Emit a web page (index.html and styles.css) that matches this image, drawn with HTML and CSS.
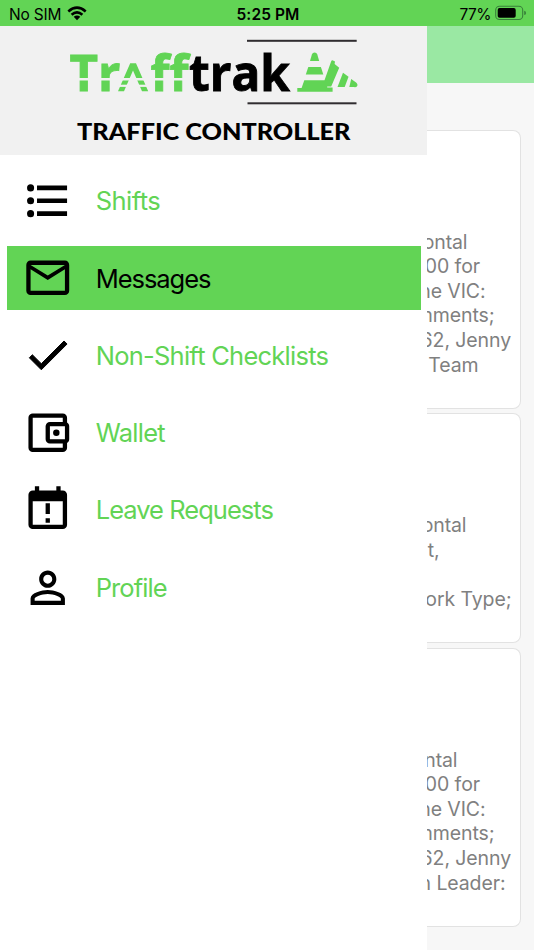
FILE: index.html
```html
<!DOCTYPE html>
<html lang="en">
<head>
<meta charset="utf-8">
<title>Trafftrak</title>
<link rel="stylesheet" href="styles.css">
</head>
<body>
<header class="status">
  <div class="carrier"><span>No SIM</span>
    <svg class="wifi" width="20" height="15" viewBox="0 0 20 15"><g fill="none" stroke="#000" stroke-width="2.6"><path d="M1.3 5.4Q10-2.2 18.7 5.4"/><path d="M4.6 8.8Q10 4 15.4 8.8"/></g><path d="M6.7 10.8Q10 8.1 13.3 10.8L10 14.3Z"/></svg>
  </div>
  <div class="clock">5:25 PM</div>
  <div class="power"><span>77%</span>
    <svg width="32" height="16" viewBox="0 0 32 16"><rect x=".7" y="1.2" width="27" height="13.3" rx="3.8" fill="none" stroke="#38803a" stroke-width="1.1"/><rect x="2.7" y="3.1" width="18" height="9.6" rx="1.8"/><path d="M29.2 5.7Q31.1 6.2 31.1 7.9T29.2 10.1Z" fill="#38803a"/></svg>
  </div>
</header>
<div class="app">
  <aside class="drawer">
    <div class="brand">
      <svg width="427" height="129" viewBox="0 26 427 129">
        <g class="logo">
          <g class="green">
            <text x="69.5" y="91" textLength="51" lengthAdjust="spacingAndGlyphs">Tr</text>
            <path class="peak" d="M118 91.2L130.2 63.3H136L148.2 91.2H142L133 70.5L124 91.2Z"/>
            <text x="150.5" y="91" textLength="38" lengthAdjust="spacingAndGlyphs">ff</text>
          </g>
          <text class="dark" x="189" y="91" textLength="101" lengthAdjust="spacingAndGlyphs">trak</text>
        </g>
        <g fill="#f1f1f1"><rect x="68" y="78" width="120.5" height="2.5"/><rect x="117" y="84.7" width="32" height="2.2"/></g>
        <g fill="#302d30"><rect x="247" y="39.8" width="109.7" height="2"/><rect x="247.5" y="102.3" width="109" height="2"/></g>
        <g fill="#61d455">
          <path d="M310 61L311.9 54.5Q312.5 52.6 314.6 52.6T317.3 54.5L319.2 61Z"/>
          <path d="M308.3 67H320.9L323.3 74.6H305.8Z"/>
          <path d="M304.3 80.2H324.5L331.2 61.2Q331.7 60 333 60.5L335 61.4L334.6 64L339.2 67.8L331.2 86.4H327.2V87.4H332.6V91.8H297.3V88H301.6Z"/>
          <path d="M343 72.7L348.5 76.8L344.7 86.9H337.5Z"/>
          <path d="M351.2 79L356.1 82.5Q358.3 84.7 357 86.2Q356.4 87.4 354 87.1H349.3Z"/>
        </g>
        <text class="role" x="77" y="139.6" textLength="273.5" lengthAdjust="spacingAndGlyphs">TRAFFIC CONTROLLER</text>
      </svg>
    </div>
    <nav class="menu">
      <a class="item"><svg viewBox="0 0 24 24"><circle cx="4" cy="6" r="1.65"/><circle cx="4" cy="12" r="1.65"/><circle cx="4" cy="18" r="1.65"/><path d="M7 4.9h14v2.2H7zM7 10.9h14v2.2H7zM7 16.9h14v2.2H7z"/></svg><span class="l-shifts">Shifts</span></a>
      <a class="item active"><svg viewBox="0 0 24 24"><path d="M22 6c0-1.1-.9-2-2-2H4c-1.1 0-2 .9-2 2v12c0 1.1.9 2 2 2h16c1.1 0 2-.9 2-2V6zm-2 0l-8 5-8-5h16zm0 12H4V8l8 5 8-5v10z"/></svg><span class="l-messages">Messages</span></a>
      <a class="item"><svg class="tick" viewBox="0 0 24 24"><path d="M9 16.17L4.83 12l-1.42 1.41L9 19 21 7l-1.41-1.41z"/></svg><span class="l-checklists">Non-Shift Checklists</span></a>
      <a class="item"><svg viewBox="0 0 24 24"><path d="M21 7.28V5c0-1.1-.9-2-2-2H5c-1.11 0-2 .9-2 2v14c0 1.1.89 2 2 2h14c1.1 0 2-.9 2-2v-2.28c.59-.35 1-.98 1-1.72V9c0-.74-.41-1.37-1-1.72zM20 9v6h-7V9h7zM5 19V5h14v2h-6c-1.1 0-2 .9-2 2v6c0 1.1.9 2 2 2h6v2H5z"/><circle cx="16" cy="12" r="1.5"/></svg><span class="l-wallet">Wallet</span></a>
      <a class="item"><svg viewBox="0 0 24 24"><path fill-rule="evenodd" d="M6 1h2v2h8V1h2v2h1a2 2 0 0 1 2 2v14a2 2 0 0 1-2 2H5a2 2 0 0 1-2-2V5a2 2 0 0 1 2-2h1zM5 8v11h14V8zM11 9h2v5h-2zM11 16h2v2h-2z"/></svg><span class="l-leave">Leave Requests</span></a>
      <a class="item"><svg viewBox="0 0 24 24"><path d="M12 5.9a2.1 2.1 0 1 1 0 4.2 2.1 2.1 0 0 1 0-4.2m0 9c2.97 0 6.1 1.46 6.1 2.1v1.1H5.9V17c0-.64 3.13-2.1 6.1-2.1M12 4C9.79 4 8 5.79 8 8s1.79 4 4 4 4-1.79 4-4-1.79-4-4-4zm0 9c-2.67 0-8 1.34-8 4v3h16v-3c0-2.66-5.33-4-8-4z"/></svg><span class="l-profile">Profile</span></a>
    </nav>
  </aside>
  <main class="page">
    <div class="toolbar"></div>
    <section class="feed">
      <article class="card tall">
        <p class="r-a">ontal</p><p class="r-for">00 for</p><p class="r-vic">he VIC:</p><p class="r-ments">mments;</p><p class="r-jenny">62, Jenny</p><p class="r-team">Team</p>
      </article>
      <article class="card short">
        <p class="r-b">ontal</p><p class="r-t">t,</p><p class="r-t">&nbsp;</p><p class="r-type">ork Type;</p>
      </article>
      <article class="card tall">
        <p class="r-c">ntal</p><p class="r-for">00 for</p><p class="r-vic">he VIC:</p><p class="r-ments">mments;</p><p class="r-jenny">62, Jenny</p><p class="r-leader">n Leader:</p>
      </article>
    </section>
  </main>
</div>
</body>
</html>
```
FILE: styles.css
```css
* { box-sizing: border-box; }
body {
  margin: 0;
  width: 534px;
  height: 950px;
  overflow: hidden;
  background: #fff;
  font-family: Inter, "Liberation Sans", sans-serif;
  color: #000;
}
.status {
  height: 26px;
  background: #62d455;
  display: grid;
  grid-template-columns: 1fr auto 1fr;
  align-items: center;
  padding: 3px 7px 0 9px;
  font-size: 15.5px;
  line-height: 23px;
}
.carrier, .power { display: flex; align-items: center; }
.carrier { gap: 6px; letter-spacing: -.2px; }
.wifi { margin-top: -3px; }
.power { justify-content: flex-end; gap: 4px; letter-spacing: -.5px; }
.power svg { margin-top: -3px; }
.clock { font-weight: 600; font-size: 15.5px; letter-spacing: .1px; }
.app { display: grid; grid-template-columns: 427px 107px; height: 924px; }
.drawer { background: #fff; }
.brand { height: 129px; background: #f1f1f1; }
.brand svg { display: block; }
.logo { font: 700 51px "Open Sans", sans-serif; }
.green { fill: #61d455; stroke: #61d455; stroke-width: .8px; }
.peak { stroke: none; }
.dark { stroke: #000; stroke-width: .9px; }
.role { font: 900 22.5px Lato, sans-serif; }
.menu { padding: 13.4px 6.5px 0 7px; display: flex; flex-direction: column; gap: 13.4px; }
.item { height: 64px; display: flex; align-items: center; padding-left: 14.7px; color: #62d455; font-size: 25.5px; }
.item svg { width: 51.5px; height: 51.5px; margin-right: 22.5px; fill: #000; flex: none; }
.tick path { stroke: #000; stroke-width: .45px; }
.l-shifts { letter-spacing: -.55px; }
.l-messages { letter-spacing: -1.05px; }
.l-checklists { letter-spacing: -.75px; }
.l-wallet { letter-spacing: -.75px; }
.l-leave { letter-spacing: -.97px; }
.l-profile { letter-spacing: -.9px; }
.active { height: 64.5px; margin-bottom: -.5px; background: #62d455; color: #000; }
.page { background: #f7f7f7; overflow: hidden; }
.toolbar { height: 57px; background: #9ae8a3; }
.feed { padding: 46.5px 13.5px 0 0; display: flex; flex-direction: column; gap: 4.5px; }
.card {
  background: #fff;
  border: 1.5px solid #e2e2e2;
  border-left: 0;
  border-radius: 0 8px 8px 0;
  padding-top: 99px;
  overflow: hidden;
  display: flex;
  flex-direction: column;
  align-items: flex-end;
  color: #808080;
  font-size: 19.5px;
  line-height: 24.65px;
  letter-spacing: -.1px;
}
.tall { height: 279px; }
.short { height: 230px; }
.card p { margin: 0; white-space: nowrap; }
.r-a { padding-right: 52px; }
.r-b { padding-right: 53px; }
.r-c { padding-right: 62px; }
.r-for { padding-right: 39.5px; }
.r-vic { padding-right: 34px; }
.r-ments { padding-right: 25px; }
.r-jenny { padding-right: 8.5px; }
.r-team { padding-right: 41px; }
.r-t { padding-right: 80px; }
.r-type { padding-right: 8px; }
.r-leader { padding-right: 14px; }
```
